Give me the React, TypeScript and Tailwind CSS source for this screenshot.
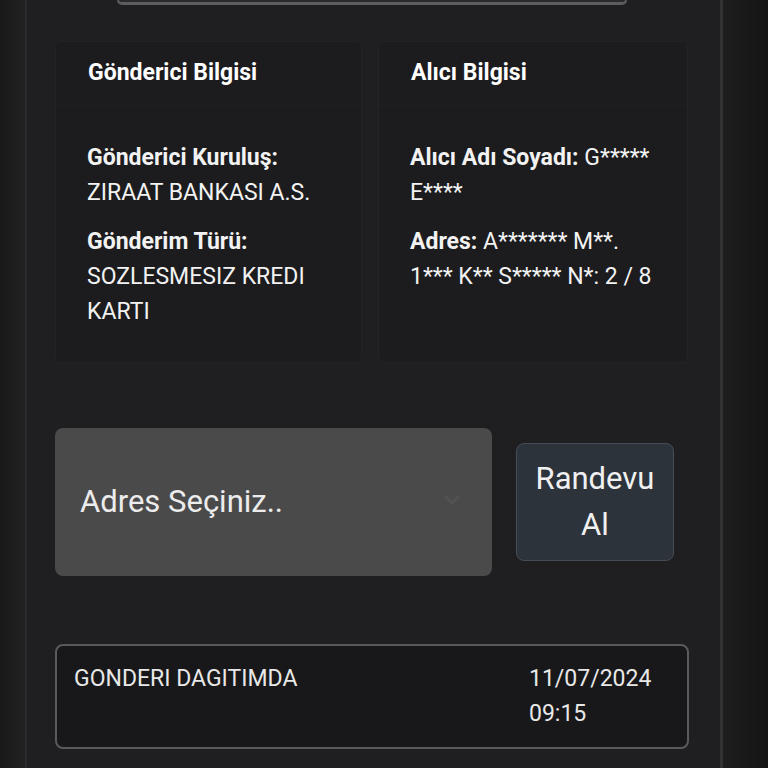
import React from "react";

const font = { fontFamily: "Roboto, 'Noto Sans', Arial, sans-serif" };

function Field({ label, value }: { label: string; value: string }) {
  return (
    <p className="text-[23px] leading-[35px] text-[#f2f2f2]">
      <span className="font-bold">{label}</span>
      {value}
    </p>
  );
}

function Card({ title, children }: { title: string; children: React.ReactNode }) {
  return (
    <div className="flex flex-col rounded-md border border-[#232326] bg-[#1c1c1e]">
      <div className="flex h-[64px] items-center border-b border-[#202023] px-[32px]">
        <h3 className="text-[23px] font-bold text-white">{title}</h3>
      </div>
      <div className="flex flex-col gap-[14px] px-[31px] pb-[33px] pt-[34px]">{children}</div>
    </div>
  );
}

export default function App() {
  return (
    <div className="flex h-[768px] w-[768px] overflow-hidden bg-[#151515]" style={font}>
      <div className="w-[25px] shrink-0 bg-gradient-to-r from-[#181818] to-[#222222]" />
      <div className="w-[2px] shrink-0 bg-[#2a2a2a]" />
      <div className="flex w-[693px] shrink-0 flex-col bg-[#1f1f21] pl-[28px] pr-[31px]">
        <div className="mx-[62px] h-[5px] rounded-b-[24px] border-x-2 border-b-[3px] border-[#5c5c5e] bg-[#2a2a2c]" />
        <div className="mt-[36px] grid grid-cols-[307px_310px] gap-[16px]">
          <Card title="Gönderici Bilgisi">
            <div>
              <p className="text-[23px] font-bold leading-[35px] text-[#f2f2f2]">Gönderici Kuruluş:</p>
              <p className="text-[23px] leading-[35px] text-[#f2f2f2]">ZIRAAT BANKASI A.S.</p>
            </div>
            <div>
              <p className="text-[23px] font-bold leading-[35px] text-[#f2f2f2]">Gönderim Türü:</p>
              <p className="text-[23px] leading-[35px] text-[#f2f2f2]">SOZLESMESIZ KREDI KARTI</p>
            </div>
          </Card>
          <Card title="Alıcı Bilgisi">
            <Field label="Alıcı Adı Soyadı: " value="G***** E****" />
            <Field label="Adres: " value="A******* M**. 1*** K** S***** N*: 2 / 8" />
          </Card>
        </div>
        <div className="mt-[65px] flex items-center gap-[24px]">
          <div className="relative flex h-[148px] w-[437px] items-center rounded-lg bg-[#4a4a4b] pl-[25px]">
            <span className="text-[31px] text-[#ececec]">Adres Seçiniz..</span>
            <svg
              className="absolute left-[388px] top-[66px]"
              width="18"
              height="12"
              viewBox="0 0 18 12"
              fill="none"
            >
              <path d="M3 3l6 6 6-6" stroke="#525254" strokeWidth="3" strokeLinecap="round" strokeLinejoin="round" />
            </svg>
          </div>
          <button className="flex h-[118px] w-[158px] flex-col items-center justify-center rounded-lg border border-[#454c55] bg-[#2d333b] text-[31px] leading-[46px] text-[#f0f0f0]">
            <span>Randevu</span>
            <span>Al</span>
          </button>
        </div>
        <div className="mt-[68px] flex h-[105px] rounded-lg border-2 border-[#5a5a5c] bg-[#18181a] pl-[17px] pt-[15px]">
          <div className="w-[455px] text-[23px] leading-[35px] text-[#e8e8e8]">GONDERI DAGITIMDA</div>
          <div className="flex flex-col text-[23px] leading-[35px] text-[#e8e8e8]">
            <span>11/07/2024</span>
            <span>09:15</span>
          </div>
        </div>
      </div>
      <div className="w-[3px] shrink-0 bg-[#333335]" />
      <div className="flex-1 bg-gradient-to-r from-[#1e1e1e] to-[#141414]" />
    </div>
  );
}
